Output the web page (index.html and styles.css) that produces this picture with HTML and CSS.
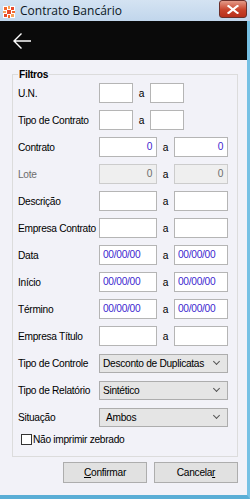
FILE: index.html
```html
<!DOCTYPE html>
<html>
<head>
    <meta charset="utf-8">
    <title>Contrato Bancário</title>
    <link rel="stylesheet" href="styles.css">
</head>
<body>
<div class="titlebar">
    <span class="app-icon">
        <svg width="12" height="12" viewBox="0 0 12 12">
            <rect width="12" height="12" fill="#fff"/>
            <rect x="1" y="1" width="3" height="3" fill="#f26a2e"/>
            <rect x="5" y="0" width="2" height="3" fill="#f7a15a"/>
            <rect x="8" y="1" width="3" height="3" fill="#e8492a"/>
            <rect x="0" y="5" width="3" height="2" fill="#f7a15a"/>
            <rect x="4" y="4" width="4" height="4" fill="#e8492a"/>
            <rect x="9" y="5" width="3" height="2" fill="#f26a2e"/>
            <rect x="1" y="8" width="3" height="3" fill="#e8492a"/>
            <rect x="5" y="9" width="2" height="3" fill="#f26a2e"/>
            <rect x="8" y="8" width="3" height="3" fill="#f7a15a"/>
        </svg>
    </span>
    <span class="title">Contrato Bancário</span>
    <span class="close-btn">
        <svg width="12" height="9" viewBox="0 0 12 9">
            <path d="M1.5 1 L10.5 8 M10.5 1 L1.5 8" stroke="#fff" stroke-width="2.2" stroke-linecap="square"/>
        </svg>
    </span>
</div>
<div class="window">
    <div class="appbar">
        <svg class="back" width="20" height="18" viewBox="0 0 20 18">
            <path d="M19 9 H2 M9.5 1.5 L2 9 L9.5 16.5" fill="none" stroke="#fff" stroke-width="1.4"/>
        </svg>
    </div>
    <div class="content">
        <fieldset class="filters">
            <legend>Filtros</legend>
            <div class="row">
                <span class="label">U.N.</span>
                <span class="field small"></span><span class="sep">a</span><span class="field small"></span>
            </div>
            <div class="row">
                <span class="label">Tipo de Contrato</span>
                <span class="field small"></span><span class="sep">a</span><span class="field small"></span>
            </div>
            <div class="row">
                <span class="label">Contrato</span>
                <span class="field num">0</span><span class="sep">a</span><span class="field num right">0</span>
            </div>
            <div class="row disabled">
                <span class="label">Lote</span>
                <span class="field num">0</span><span class="sep">a</span><span class="field num right">0</span>
            </div>
            <div class="row">
                <span class="label">Descrição</span>
                <span class="field"></span><span class="sep">a</span><span class="field right"></span>
            </div>
            <div class="row">
                <span class="label">Empresa Contrato</span>
                <span class="field"></span><span class="sep">a</span><span class="field right"></span>
            </div>
            <div class="row">
                <span class="label">Data</span>
                <span class="field date">00/00/00</span><span class="sep">a</span><span class="field date right">00/00/00</span>
            </div>
            <div class="row">
                <span class="label">Início</span>
                <span class="field date">00/00/00</span><span class="sep">a</span><span class="field date right">00/00/00</span>
            </div>
            <div class="row">
                <span class="label">Término</span>
                <span class="field date">00/00/00</span><span class="sep">a</span><span class="field date right">00/00/00</span>
            </div>
            <div class="row">
                <span class="label">Empresa Título</span>
                <span class="field"></span><span class="sep">a</span><span class="field right"></span>
            </div>
            <div class="row">
                <span class="label">Tipo de Controle</span>
                <span class="combo">Desconto de Duplicatas<i class="chev"></i></span>
            </div>
            <div class="row">
                <span class="label">Tipo de Relatório</span>
                <span class="combo">Sintético<i class="chev"></i></span>
            </div>
            <div class="row">
                <span class="label">Situação</span>
                <span class="combo center">Ambos<i class="chev"></i></span>
            </div>
            <div class="check-row">
                <span class="checkbox"></span>Não imprimir zebrado
            </div>
        </fieldset>
        <div class="actions">
            <button class="btn"><u>C</u>onfirmar</button>
            <button class="btn">Cancela<u>r</u></button>
        </div>
    </div>
</div>
</body>
</html>
```

FILE: styles.css
```css
body {
    margin: 0;
    width: 250px;
    height: 499px;
    overflow: hidden;
    font-family: 'Liberation Sans', Arial, sans-serif;
    font-size: 10.2px;
    letter-spacing: -0.3px;
    color: #000;
    background: #6fb3d9;
}
.titlebar {
    height: 21px;
    display: flex;
    align-items: center;
    background: linear-gradient(#d4e3f2, #c1d6ec);
    letter-spacing: 0;
}
.app-icon {
    display: flex;
    margin-left: 3px;
    margin-top: 2px;
}
.title {
    margin-left: 5px;
    font-family: 'Open Sans', sans-serif;
    font-size: 12px;
    color: #0b1623;
}
.close-btn {
    margin-left: auto;
    margin-right: 3px;
    margin-top: -3px;
    width: 26px;
    height: 16px;
    display: flex;
    align-items: center;
    justify-content: center;
    border: 1px solid #6b2f2a;
    border-radius: 3px;
    background: linear-gradient(#e49a88, #c9442c 55%, #b8301c);
}
.window {
    height: 474px;
    border-right: 3px solid #77c1e4;
    border-bottom: 4px solid #5aaed6;
    display: flex;
    flex-direction: column;
}
.appbar {
    height: 39px;
    background: #0a0a0a;
    display: flex;
    align-items: center;
}
.back {
    margin-left: 12px;
    margin-top: 1px;
}
.content {
    flex: 1;
    background: #f2f2f8;
    padding: 9px 9px 0 12px;
}
.filters {
    margin: 0;
    padding: 3px 0 8px 5px;
    border: 1px solid #dcdcdc;
    height: 388px;
    box-sizing: border-box;
}
.filters legend {
    font-weight: bold;
    padding: 0 1px;
    margin-left: 0;
}
.row {
    display: flex;
    align-items: center;
    height: 20px;
    margin-bottom: 7px;
    white-space: nowrap;
}
.label {
    width: 81px;
    flex-shrink: 0;
}
.disabled .label {
    color: #6d6d6d;
}
.field {
    box-sizing: border-box;
    width: 58px;
    height: 20px;
    border: 1px solid #b5b5b5;
    background: #fff;
    padding: 0 4px;
    line-height: 18px;
}
.field.right {
    width: 54px;
}
.field.small {
    width: 34px;
}
.num {
    text-align: right;
    color: #3d1fd0;
}
.date {
    color: #3d1fd0;
    padding: 0 3px;
}
.disabled .field {
    background: #efefef;
    border-color: #cccccc;
    color: #6d6d6d;
}
.sep {
    width: 17px;
    text-align: center;
}
.combo {
    box-sizing: border-box;
    width: 129px;
    height: 19px;
    border: 1px solid #adadad;
    background: #e5e5e5;
    padding: 0 3px;
    line-height: 17px;
    position: relative;
}
.combo.center {
    padding-left: 6px;
}
.chev {
    position: absolute;
    right: 8px;
    top: 4px;
    width: 4px;
    height: 4px;
    border-right: 1px solid #555;
    border-bottom: 1px solid #555;
    transform: rotate(45deg);
}
.check-row {
    display: flex;
    align-items: center;
    margin-left: 3px;
    margin-top: 5px;
    white-space: nowrap;
}
.checkbox {
    width: 9px;
    height: 9px;
    border: 1px solid #333;
    background: #fff;
    margin-right: 1px;
}
.actions {
    display: flex;
    justify-content: flex-end;
    gap: 7px;
    margin-top: 5px;
}
.btn {
    width: 84px;
    height: 21px;
    border: 1px solid #adadad;
    background: #e1e1e1;
    font-family: 'Liberation Sans', Arial, sans-serif;
    font-size: 10.2px;
    letter-spacing: -0.3px;
    color: #000;
    padding: 0;
}
```
